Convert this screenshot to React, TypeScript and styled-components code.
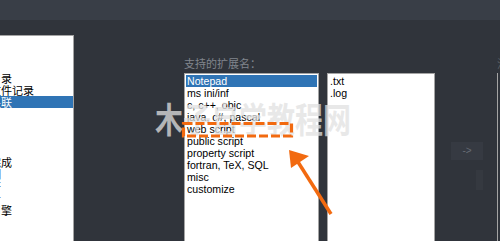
import React from 'react';
import styled, { createGlobalStyle } from 'styled-components';

const GlobalStyle = createGlobalStyle`
    html, body {
        margin: 0;
        padding: 0;
        background: #30343b;
        overflow: hidden;
    }
`;

const Page = styled.div`
    position: relative;
    width: 500px;
    height: 241px;
    display: flex;
    flex-direction: column;
    background: #30343b;
    font-family: 'Liberation Sans', 'Noto Sans CJK SC', sans-serif;
    overflow: hidden;
`;

const TopBar = styled.div`
    height: 20px;
    background: #393e47;
    flex-shrink: 0;
`;

const Main = styled.div`
    flex: 1;
    display: flex;
    flex-direction: row;
    min-width: 0;
`;

const CategoryPanel = styled.div`
    width: 73px;
    flex-shrink: 0;
    margin-top: 15px;
    background: #fff;
    border-top: 1px solid #a4a4a4;
    border-right: 1px solid #a4a4a4;
    overflow: hidden;
`;

const CategoryList = styled.div`
    margin-left: -32px;
    display: flex;
    flex-direction: column;
`;

const Category = styled.div<{ $active?: boolean }>`
    height: 12px;
    line-height: 12px;
    font-family: 'Noto Sans CJK SC', sans-serif;
    font-size: 11px;
    white-space: nowrap;
    color: ${p => (p.$active ? '#fff' : '#000')};
    background: ${p => (p.$active ? '#2f74b5' : 'transparent')};
`;

const ExtSection = styled.div`
    flex: 0 0 313px;
    margin-left: 110px;
    padding-top: 35px;
    display: flex;
    flex-direction: column;
`;

const SectionLabel = styled.div`
    height: 18px;
    line-height: 16px;
    font-family: 'Noto Sans CJK SC', sans-serif;
    font-size: 11px;
    color: #80858d;
    white-space: nowrap;
`;

const ListsRow = styled.div`
    flex: 1;
    display: flex;
    flex-direction: row;
    gap: 8px;
`;

const ListBox = styled.div<{ $width: number }>`
    flex: 0 0 ${p => p.$width}px;
    background: #fff;
    border: 1px solid #a4a4a4;
    border-bottom: none;
    padding: 1px;
    box-sizing: border-box;
    display: flex;
    flex-direction: column;
`;

const ListItem = styled.div<{ $active?: boolean }>`
    height: 12px;
    line-height: 12px;
    padding-left: 1px;
    font-size: 10.6px;
    white-space: nowrap;
    color: ${p => (p.$active ? '#fff' : '#000')};
    background: ${p => (p.$active ? '#2f74b5' : 'transparent')};
`;

const ActionColumn = styled.div`
    flex: 1;
    margin-left: -8px;
    padding: 69px 0 0 16px;
    display: flex;
    flex-direction: column;
    align-items: flex-start;
`;

const ArrowButton = styled.div`
    width: 32px;
    height: 18px;
    background: #363a42;
    color: #666b74;
    font-size: 10px;
    line-height: 18px;
    text-align: center;
`;

const FaintSlot = styled.div`
    width: 7px;
    height: 20px;
    margin: 10px 0 0 25px;
    background: #353940;
`;

const CutSection = styled.div`
    flex: 1;
    min-width: 0;
    overflow: hidden;
    padding-top: 35px;
    display: flex;
    flex-direction: column;
`;

const CutLabel = styled.div`
    height: 18px;
    line-height: 16px;
    font-family: 'Noto Sans CJK SC', sans-serif;
    font-size: 11px;
    color: #5c6168;
    white-space: nowrap;
`;

const CutBox = styled.div`
    flex: 1;
    border-left: 1px solid #a4a4a4;
`;

const Watermark = styled.div`
    position: absolute;
    left: 155px;
    top: 100px;
    font-family: 'Noto Sans CJK SC', sans-serif;
    font-weight: 700;
    font-size: 28px;
    line-height: 28px;
    color: rgba(225, 225, 225, 0.75);
    white-space: nowrap;
    transform: scaleY(1.25);
    transform-origin: top left;
    pointer-events: none;
`;

const Annotation = styled.svg`
    position: absolute;
    left: 0;
    top: 0;
    pointer-events: none;
`;

const categories = [
    '常用', '编辑', '新建', '默认目录', '最近文件记录', '文件关联', '语言', '高亮',
    '打印', '备份', '自动完成', '多实例', '分隔符', '云同步', '搜索引擎', '其他',
];

const languages = [
    'Notepad', 'ms ini/inf', 'c, c++, objc', 'java, c#, pascal', 'web script',
    'public script', 'property script', 'fortran, TeX, SQL', 'misc', 'customize',
];

export default function App() {
    return (
        <Page>
            <GlobalStyle />
            <TopBar />
            <Main>
                <CategoryPanel>
                    <CategoryList>
                        {categories.map(c => (
                            <Category key={c} $active={c === '文件关联'}>{c}</Category>
                        ))}
                    </CategoryList>
                </CategoryPanel>
                <ExtSection>
                    <SectionLabel>支持的扩展名：</SectionLabel>
                    <ListsRow>
                        <ListBox $width={135}>
                            {languages.map(l => (
                                <ListItem key={l} $active={l === 'Notepad'}>{l}</ListItem>
                            ))}
                        </ListBox>
                        <ListBox $width={108}>
                            <ListItem>.txt</ListItem>
                            <ListItem>.log</ListItem>
                        </ListBox>
                        <ActionColumn>
                            <ArrowButton>-&gt;</ArrowButton>
                            <FaintSlot />
                        </ActionColumn>
                    </ListsRow>
                </ExtSection>
                <CutSection>
                    <CutLabel>注册的扩展名：</CutLabel>
                    <CutBox />
                </CutSection>
            </Main>
            <Watermark>木子自学教程网</Watermark>
            <Annotation width="500" height="241" viewBox="0 0 500 241">
                <rect x="183.5" y="123.5" width="108" height="12.5" fill="none"
                    stroke="#f26a10" strokeWidth="3.2" strokeDasharray="9 3" />
                <line x1="298" y1="162" x2="331" y2="214" stroke="#f26a10" strokeWidth="3.5" />
                <polygon points="289,150 309,156 291,168" fill="#f26a10" />
            </Annotation>
        </Page>
    );
}
